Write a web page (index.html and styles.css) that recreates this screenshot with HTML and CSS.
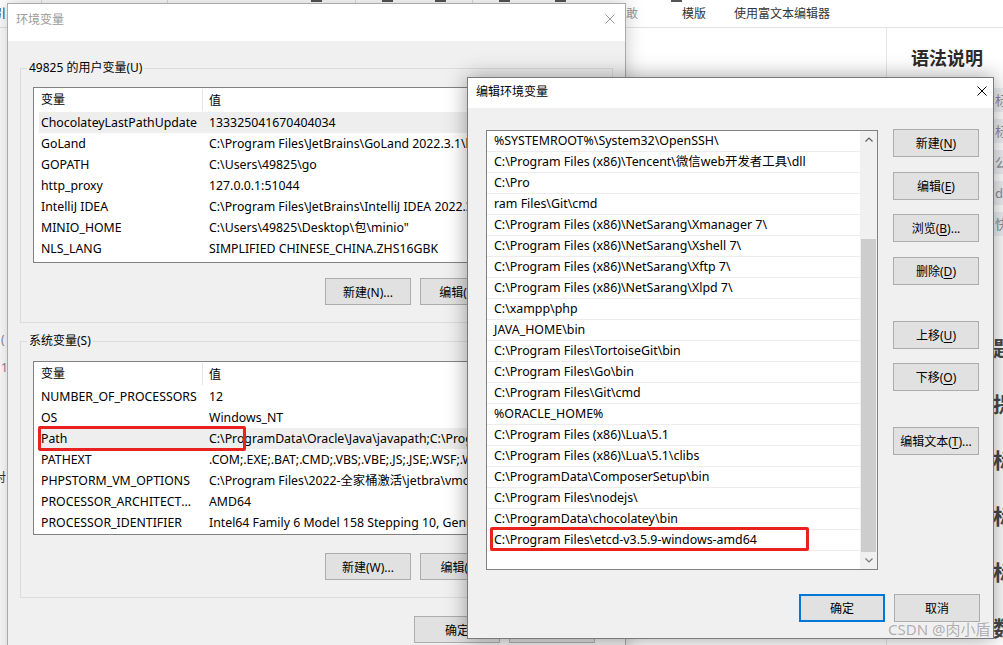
FILE: index.html
```html
<!DOCTYPE html>
<html lang="zh-CN">
<head>
<meta charset="utf-8">
<title>环境变量</title>
<link rel="stylesheet" href="styles.css">
</head>
<body>
<div class="desktop">
  <div class="bgpage">
    <div class="toolbar">
      <div class="tb-strip">
        <span class="mk sepl" style="margin-left:41px"></span>
        <span class="mk sepl" style="margin-left:125px"></span>
        <span class="mk dark" style="margin-left:143px"></span>
        <span class="mk sepl" style="margin-left:33px"></span>
        <span class="mk dark" style="margin-left:26px"></span>
        <span class="mk dark" style="margin-left:42px"></span>
        <span class="mk sepl" style="margin-left:26px"></span>
        <span class="mk dark" style="margin-left:26px"></span>
        <span class="mk dark" style="margin-left:45px"></span>
        <span class="mk dark" style="margin-left:105px"></span>
      </div>
      <div class="tb-row">
        <span class="tb-cut">引</span>
        <span class="tb-item tb-undo">敢</span>
        <span class="tb-item tb-tpl">模版</span>
        <span class="tb-item tb-rich">使用富文本编辑器</span>
      </div>
    </div>
    <div class="workspace">
      <div class="leftcol">
        <span class="lc lc1">(</span>
        <span class="lc lc2">1</span>
        <span class="lc lc3">对</span>
      </div>
      <div class="editor"></div>
      <aside class="sidepanel">
        <h3 class="sp-title">语法说明</h3>
        <ul class="sp-table">
          <li>标题文本样式</li>
          <li>标列表</li>
          <li>公式</li>
          <li>d链接</li>
          <li>快捷键</li>
        </ul>
        <div class="sp-heads">
          <span>题</span>
          <span>提</span>
          <span>标</span>
          <span>标</span>
          <span>标</span>
          <span>数</span>
        </div>
      </aside>
    </div>
  </div>

  <section class="win win-main">
    <header class="titlebar inactive">
      <span class="title">环境变量</span>
      <svg class="close" width="10" height="10" viewBox="0 0 10 10"><path d="M0.5 0.5L9.5 9.5M9.5 0.5L0.5 9.5"/></svg>
    </header>
    <div class="main-body">
      <fieldset class="group">
        <legend>49825 的用户变量(U)</legend>
        <div class="listview lv-user">
          <div class="lv-head"><span class="c1">变量</span><span class="c2">值</span></div>
          <div class="lv-row sel"><span class="c1">ChocolateyLastPathUpdate</span><span class="c2">133325041670404034</span></div>
          <div class="lv-row"><span class="c1">GoLand</span><span class="c2">C:\Program Files\JetBrains\GoLand 2022.3.1\bin;</span></div>
          <div class="lv-row"><span class="c1">GOPATH</span><span class="c2">C:\Users\49825\go</span></div>
          <div class="lv-row"><span class="c1">http_proxy</span><span class="c2">127.0.0.1:51044</span></div>
          <div class="lv-row"><span class="c1">IntelliJ IDEA</span><span class="c2">C:\Program Files\JetBrains\IntelliJ IDEA 2022.3.1\bin;</span></div>
          <div class="lv-row"><span class="c1">MINIO_HOME</span><span class="c2">C:\Users\49825\Desktop\包\minio"</span></div>
          <div class="lv-row"><span class="c1">NLS_LANG</span><span class="c2">SIMPLIFIED CHINESE_CHINA.ZHS16GBK</span></div>
        </div>
        <div class="btnrow">
          <button class="btn">新建(N)...</button>
          <button class="btn">编辑(E)...</button>
          <button class="btn">删除(D)</button>
        </div>
      </fieldset>
      <fieldset class="group group-sys">
        <legend>系统变量(S)</legend>
        <div class="listview lv-sys">
          <div class="lv-head"><span class="c1">变量</span><span class="c2">值</span></div>
          <div class="lv-row"><span class="c1">NUMBER_OF_PROCESSORS</span><span class="c2">12</span></div>
          <div class="lv-row"><span class="c1">OS</span><span class="c2">Windows_NT</span></div>
          <div class="lv-row sel marked"><span class="c1">Path</span><span class="c2">C:\ProgramData\Oracle\Java\javapath;C:\Program Files\</span></div>
          <div class="lv-row"><span class="c1">PATHEXT</span><span class="c2">.COM;.EXE;.BAT;.CMD;.VBS;.VBE;.JS;.JSE;.WSF;.WSH;.MSC</span></div>
          <div class="lv-row"><span class="c1">PHPSTORM_VM_OPTIONS</span><span class="c2">C:\Program Files\2022-全家桶激活\jetbra\vmoptions</span></div>
          <div class="lv-row"><span class="c1">PROCESSOR_ARCHITECTURE</span><span class="c2">AMD64</span></div>
          <div class="lv-row"><span class="c1">PROCESSOR_IDENTIFIER</span><span class="c2">Intel64 Family 6 Model 158 Stepping 10, GenuineIntel</span></div>
        </div>
        <div class="btnrow btnrow-sys">
          <button class="btn">新建(W)...</button>
          <button class="btn">编辑(I)...</button>
          <button class="btn">删除(L)</button>
        </div>
      </fieldset>
      <div class="dlg-actions">
        <button class="btn">确定</button>
        <button class="btn">取消</button>
      </div>
    </div>
  </section>

  <section class="win win-edit">
    <header class="titlebar">
      <span class="title">编辑环境变量</span>
      <svg class="close" width="10" height="10" viewBox="0 0 10 10"><path d="M0.5 0.5L9.5 9.5M9.5 0.5L0.5 9.5"/></svg>
    </header>
    <div class="edit-body">
      <div class="edit-main">
        <div class="pathlist">
          <ul class="path-items">
            <li>%SYSTEMROOT%\System32\OpenSSH\</li>
            <li>C:\Program Files (x86)\Tencent\微信web开发者工具\dll</li>
            <li>C:\Pro</li>
            <li>ram Files\Git\cmd</li>
            <li>C:\Program Files (x86)\NetSarang\Xmanager 7\</li>
            <li>C:\Program Files (x86)\NetSarang\Xshell 7\</li>
            <li>C:\Program Files (x86)\NetSarang\Xftp 7\</li>
            <li>C:\Program Files (x86)\NetSarang\Xlpd 7\</li>
            <li>C:\xampp\php</li>
            <li>JAVA_HOME\bin</li>
            <li>C:\Program Files\TortoiseGit\bin</li>
            <li>C:\Program Files\Go\bin</li>
            <li>C:\Program Files\Git\cmd</li>
            <li>%ORACLE_HOME%</li>
            <li>C:\Program Files (x86)\Lua\5.1</li>
            <li>C:\Program Files (x86)\Lua\5.1\clibs</li>
            <li>C:\ProgramData\ComposerSetup\bin</li>
            <li>C:\Program Files\nodejs\</li>
            <li>C:\ProgramData\chocolatey\bin</li>
            <li class="marked">C:\Program Files\etcd-v3.5.9-windows-amd64</li>
          </ul>
          <div class="vscroll">
            <span class="arrow up"><svg width="8" height="5" viewBox="0 0 8 5"><path d="M0.5 4.5L4 1L7.5 4.5"/></svg></span>
            <div class="track"><div class="thumb"></div></div>
            <span class="arrow down"><svg width="8" height="5" viewBox="0 0 8 5"><path d="M0.5 0.5L4 4L7.5 0.5"/></svg></span>
          </div>
        </div>
        <div class="side-btns">
          <button class="btn">新建(<u>N</u>)</button>
          <button class="btn">编辑(<u>E</u>)</button>
          <button class="btn">浏览(<u>B</u>)...</button>
          <button class="btn">删除(<u>D</u>)</button>
          <button class="btn sep">上移(<u>U</u>)</button>
          <button class="btn">下移(<u>O</u>)</button>
          <button class="btn sep">编辑文本(<u>T</u>)...</button>
        </div>
      </div>
      <div class="edit-actions">
        <button class="btn primary">确定</button>
        <button class="btn">取消</button>
      </div>
    </div>
  </section>

  <div class="watermark">CSDN @肉小盾</div>
</div>
</body>
</html>
```

FILE: styles.css
```css
html, body {
  margin: 0;
  padding: 0;
}
body {
  width: 1003px;
  height: 645px;
  overflow: hidden;
  background: #ffffff;
  color: #000000;
  font-family: "Noto Sans", "Noto Sans CJK SC", sans-serif;
  font-size: 12px;
}
.desktop {
  position: relative;
  width: 1003px;
  height: 645px;
  overflow: hidden;
}

/* ---------- background page ---------- */
.bgpage {
  display: flex;
  flex-direction: column;
  height: 100%;
}
.toolbar {
  flex: none;
  height: 28px;
  box-sizing: border-box;
  border-bottom: 1px solid #e2e2e2;
  display: flex;
  flex-direction: column;
}
.tb-strip {
  height: 3px;
  display: flex;
  align-items: flex-start;
}
.mk {
  flex: none;
  display: block;
}
.mk.dark {
  width: 11px;
  height: 2px;
  background: #555;
}
.mk.sepl {
  width: 1px;
  height: 3px;
  background: #dedede;
}
.tb-row {
  height: 20px;
  display: flex;
  align-items: center;
  white-space: nowrap;
  color: #333;
}
.tb-cut {
  margin-left: -6px;
  color: #222;
}
.tb-undo { margin-left: 620px; color: #999; }
.tb-tpl { margin-left: 44px; }
.tb-rich { margin-left: 28px; }

.workspace {
  flex: 1;
  display: flex;
  min-height: 0;
}
.leftcol {
  width: 7px;
  flex: none;
  overflow: hidden;
  display: flex;
  flex-direction: column;
  color: #888;
  line-height: 16px;
}
.lc { display: block; white-space: nowrap; }
.lc1 { margin-top: 304px; margin-left: 1px; }
.lc2 { margin-top: 12px; margin-left: 1px; }
.lc3 { margin-top: 94px; margin-left: -6px; color: #333; }
.editor {
  flex: 1;
  background: #fff;
  border-right: 1px solid #e6e6e6;
}
.sidepanel {
  width: 116px;
  flex: none;
  background: #fff;
  overflow: hidden;
}
.sp-title {
  margin: 19px 0 0 24px;
  font-size: 18px;
  line-height: 22px;
  font-weight: 700;
  color: #2b2b2b;
  white-space: nowrap;
}
.sp-table {
  list-style: none;
  margin: 19px 0 0 0;
  padding: 0;
  display: flex;
  flex-direction: column;
  gap: 7px;
}
.sp-table li {
  height: 24px;
  line-height: 24px;
  background: #eef0f4;
  color: #8a8f99;
  padding-left: 108px;
  white-space: nowrap;
  font-size: 13px;
}
.sp-heads {
  display: flex;
  flex-direction: column;
  margin-top: 100px;
  gap: 31px;
  padding-left: 106px;
  font-size: 21px;
  font-weight: 700;
  line-height: 25px;
  color: #4a4a4a;
}

/* ---------- windows ---------- */
.win {
  position: absolute;
  box-sizing: border-box;
  background: #f0f0f0;
  display: flex;
  flex-direction: column;
}
.titlebar {
  flex: none;
  background: #fff;
  display: flex;
  align-items: center;
  justify-content: space-between;
  white-space: nowrap;
}
.titlebar .close path {
  stroke: currentColor;
  stroke-width: 1;
  fill: none;
}
.titlebar.inactive {
  color: #9a9a9a;
}

.btn {
  flex: none;
  box-sizing: border-box;
  width: 86px;
  height: 27px;
  margin: 0;
  padding: 0;
  background: #e1e1e1;
  border: 1px solid #adadad;
  border-radius: 0;
  font-family: inherit;
  font-size: 12px;
  color: #000;
  white-space: nowrap;
}
.btn u {
  text-decoration: underline;
  text-underline-offset: 2px;
}

/* main dialog */
.win-main {
  left: 7px;
  top: 3px;
  width: 619px;
  height: 720px;
  border: 1px solid #aaaaaa;
  box-shadow: 0 0 18px rgba(0, 0, 0, 0.22);
}
.win-main .titlebar {
  height: 37px;
  padding: 0 10px 8px 8px;
  box-sizing: border-box;
}
.main-body {
  padding: 19px 12px 0 12px;
  display: flex;
  flex-direction: column;
}
.group {
  margin: 0;
  padding: 0 0 17px 0;
  border: 1px solid #dcdcdc;
  min-width: 0;
}
.group legend {
  margin-left: 6px;
  padding: 0 2px;
  line-height: 16px;
  color: #000;
}
.group-sys {
  margin-top: 10px;
}
.listview {
  margin: 11px 12px 0 12px;
  box-sizing: border-box;
  border: 1px solid #828282;
  background: #fff;
  overflow: hidden;
}
.lv-user { height: 176px; }
.lv-sys { margin-top: 12px; height: 174px; }
.lv-head {
  height: 24px;
  display: flex;
  align-items: center;
}
.lv-head .c1 {
  width: 164px;
  margin-left: 5px;
  padding-left: 2px;
  box-sizing: border-box;
  border-right: 1px solid #e5e5e5;
  height: 22px;
  line-height: 22px;
}
.lv-head .c2 {
  padding-left: 6px;
}
.lv-row {
  position: relative;
  height: 21px;
  line-height: 21px;
  margin-left: 5px;
  display: flex;
  white-space: nowrap;
  font-size: 12.3px;
}
.lv-row.sel {
  background: #eeeeee;
}
.lv-row .c1 {
  flex: none;
  width: 164px;
  box-sizing: border-box;
  padding: 0 5px 0 2px;
  overflow: hidden;
  text-overflow: ellipsis;
}
.lv-row .c2 {
  flex: 1;
  padding-left: 6px;
  overflow: hidden;
}
.lv-row.marked::after {
  content: "";
  position: absolute;
  left: -1px;
  top: -2px;
  width: 208px;
  height: 25px;
  box-sizing: border-box;
  border: 3px solid #e8231f;
  border-radius: 2px;
}
.btnrow {
  display: flex;
  justify-content: flex-end;
  gap: 9px;
  margin: 15px 11px 0 12px;
}
.btnrow-sys {
  margin-top: 18px;
}
.dlg-actions {
  display: flex;
  justify-content: flex-end;
  gap: 9px;
  margin: 18px 18px 0 0;
}

/* edit dialog */
.win-edit {
  left: 467px;
  top: 77px;
  width: 527px;
  height: 562px;
  border: 1px solid #7a7a7a;
  box-shadow: 0 0 20px rgba(0, 0, 0, 0.38);
}
.win-edit .titlebar {
  height: 30px;
  padding: 0 6px 4px 8px;
  box-sizing: border-box;
}
.edit-body {
  flex: 1;
  display: flex;
  flex-direction: column;
  padding: 22px 13px 16px 18px;
}
.edit-main {
  display: flex;
  gap: 15px;
  align-items: flex-start;
}
.pathlist {
  flex: none;
  width: 392px;
  height: 440px;
  box-sizing: border-box;
  border: 1px solid #828282;
  background: #fff;
  display: flex;
}
.path-items {
  flex: 1;
  margin: 0;
  padding: 0;
  list-style: none;
  overflow: hidden;
}
.path-items li {
  position: relative;
  height: 21px;
  line-height: 20px;
  box-sizing: border-box;
  border-bottom: 1px solid #ededed;
  padding-left: 7px;
  white-space: nowrap;
  font-size: 12.4px;
}
.path-items li.marked::after {
  content: "";
  position: absolute;
  left: 3px;
  top: -3px;
  width: 319px;
  height: 24px;
  box-sizing: border-box;
  border: 3px solid #e8231f;
  border-radius: 2px;
}
.vscroll {
  flex: none;
  width: 17px;
  background: #f0f0f0;
  display: flex;
  flex-direction: column;
}
.arrow {
  flex: none;
  height: 17px;
  display: flex;
  align-items: center;
  justify-content: center;
}
.arrow path {
  fill: none;
  stroke-width: 1.2;
}
.arrow.up path { stroke: #606060; }
.arrow.down path { stroke: #7a7a7a; }
.track {
  flex: 1;
  display: flex;
  flex-direction: column;
  justify-content: flex-end;
  padding: 0 1px;
}
.thumb {
  height: 313px;
  background: #cdcdcd;
}
.side-btns {
  display: flex;
  flex-direction: column;
  margin-top: -1px;
}
.side-btns .btn {
  height: 28px;
}
.side-btns .btn + .btn {
  margin-top: 14.5px;
}
.side-btns .btn.sep {
  margin-top: 36px;
}
.edit-actions {
  margin-top: auto;
  display: flex;
  justify-content: flex-end;
  gap: 9px;
}
.edit-actions .btn {
  height: 28px;
}
.btn.primary {
  border: 2px solid #0078d7;
}

/* watermark */
.watermark {
  position: absolute;
  left: 888px;
  top: 619px;
  font-size: 15px;
  line-height: 20px;
  color: rgba(165, 165, 165, 0.9);
  white-space: nowrap;
  text-shadow: 0 0 1px rgba(255, 255, 255, 0.6);
}
```
